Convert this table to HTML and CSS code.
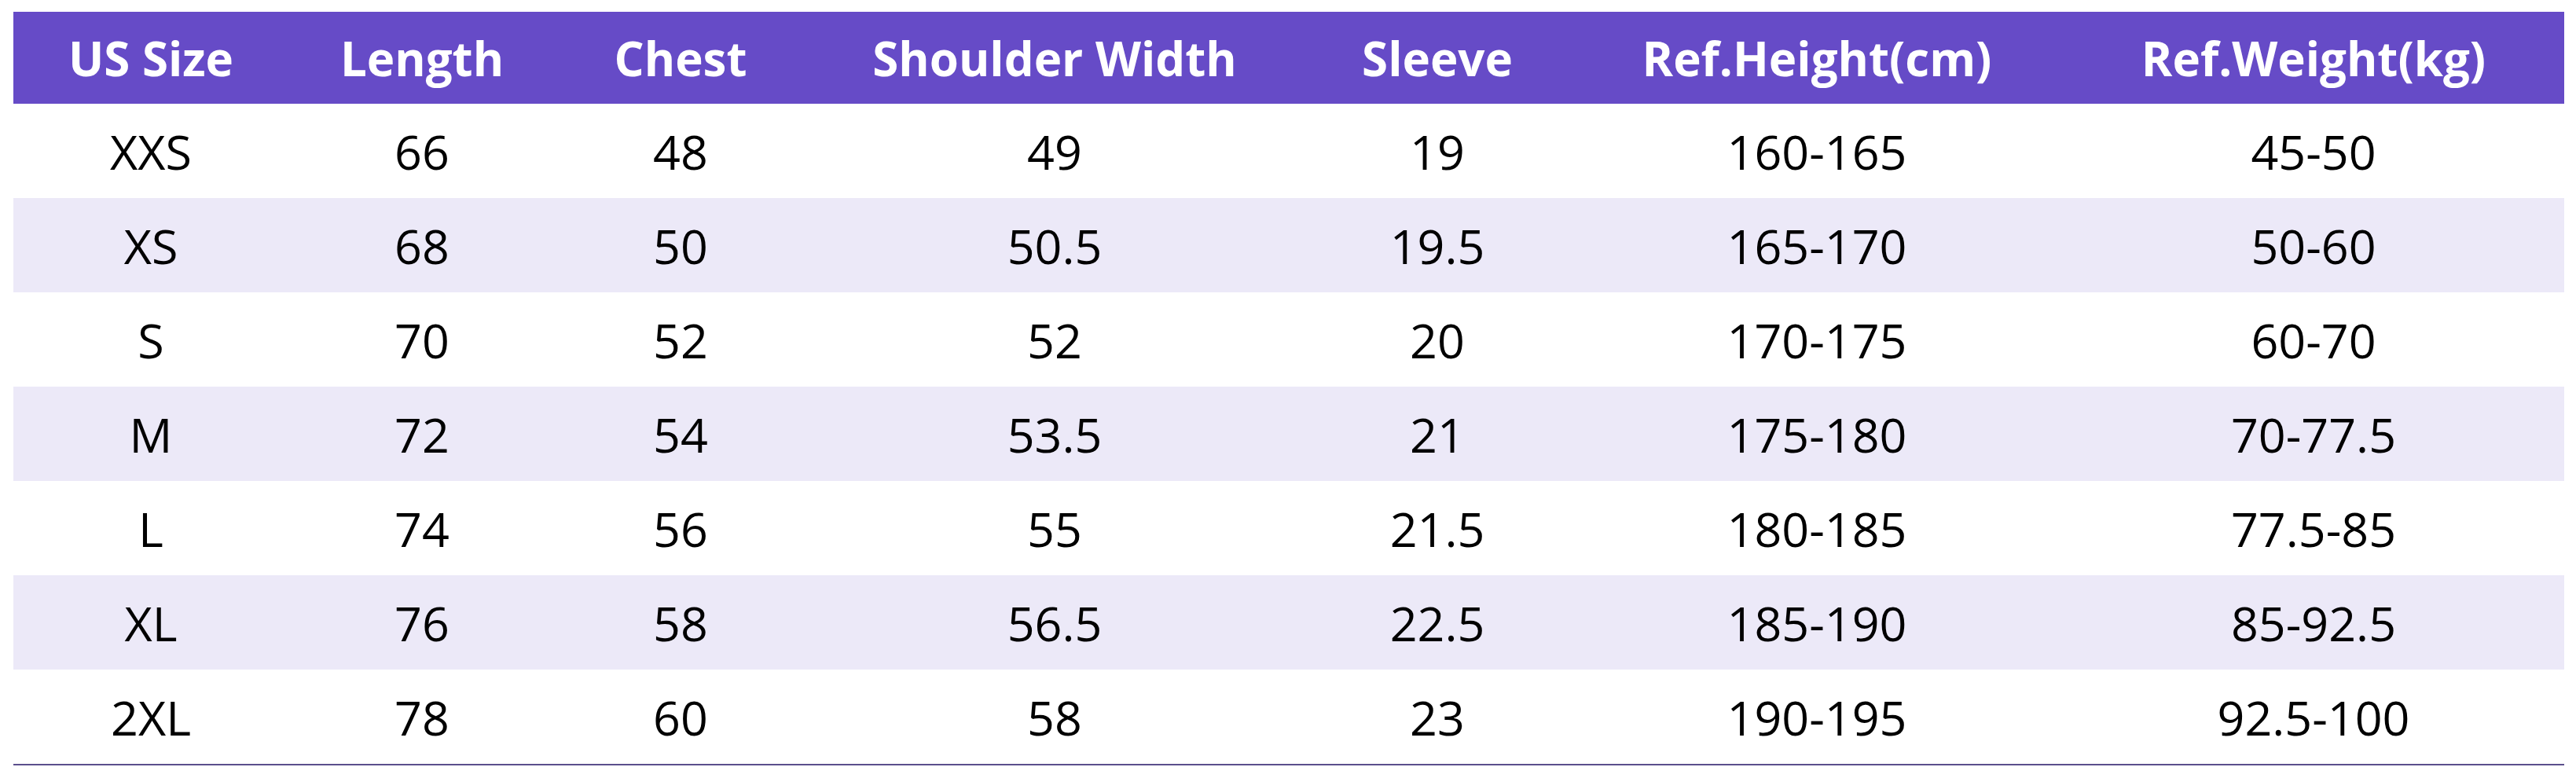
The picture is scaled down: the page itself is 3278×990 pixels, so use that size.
FILE: index.html
```html
<!DOCTYPE html>
<html>
<head>
<meta charset="utf-8">
<link rel="stylesheet" href="styles.css">
</head>
<body>
<div class="sheet">
  <div class="row head">
    <div>US Size</div><div>Length</div><div>Chest</div><div>Shoulder Width</div><div>Sleeve</div><div>Ref.Height(cm)</div><div>Ref.Weight(kg)</div>
  </div>
  <div class="row"><div>XXS</div><div>66</div><div>48</div><div>49</div><div>19</div><div>160-165</div><div>45-50</div></div>
  <div class="row alt"><div>XS</div><div>68</div><div>50</div><div>50.5</div><div>19.5</div><div>165-170</div><div>50-60</div></div>
  <div class="row"><div>S</div><div>70</div><div>52</div><div>52</div><div>20</div><div>170-175</div><div>60-70</div></div>
  <div class="row alt"><div>M</div><div>72</div><div>54</div><div>53.5</div><div>21</div><div>175-180</div><div>70-77.5</div></div>
  <div class="row"><div>L</div><div>74</div><div>56</div><div>55</div><div>21.5</div><div>180-185</div><div>77.5-85</div></div>
  <div class="row alt"><div>XL</div><div>76</div><div>58</div><div>56.5</div><div>22.5</div><div>185-190</div><div>85-92.5</div></div>
  <div class="row last"><div>2XL</div><div>78</div><div>60</div><div>58</div><div>23</div><div>190-195</div><div>92.5-100</div></div>
</div>
</body>
</html>
```
FILE: styles.css
```css
html, body {
  margin: 0;
  padding: 0;
  background: #ffffff;
}
body {
  padding: 15px 15px 0 17px;
  font-family: "Open Sans", "Noto Sans", "Liberation Sans", sans-serif;
}
.sheet {
  width: 3246px;
}
.row {
  display: grid;
  grid-template-columns: 350px 340px 318px 634px 340px 626px 638px;
  height: 120px;
  align-items: center;
  font-size: 61px;
  color: #000000;
  background: #ffffff;
}
.row > div {
  text-align: center;
  line-height: 1;
}
.row.head {
  height: 117px;
  background: #664bc7;
  color: #ffffff;
  font-weight: 700;
  font-size: 60px;
}
.row.alt {
  background: #ece9f8;
}
.row.last {
  border-bottom: 2px solid #5b4f8c;
}
```
